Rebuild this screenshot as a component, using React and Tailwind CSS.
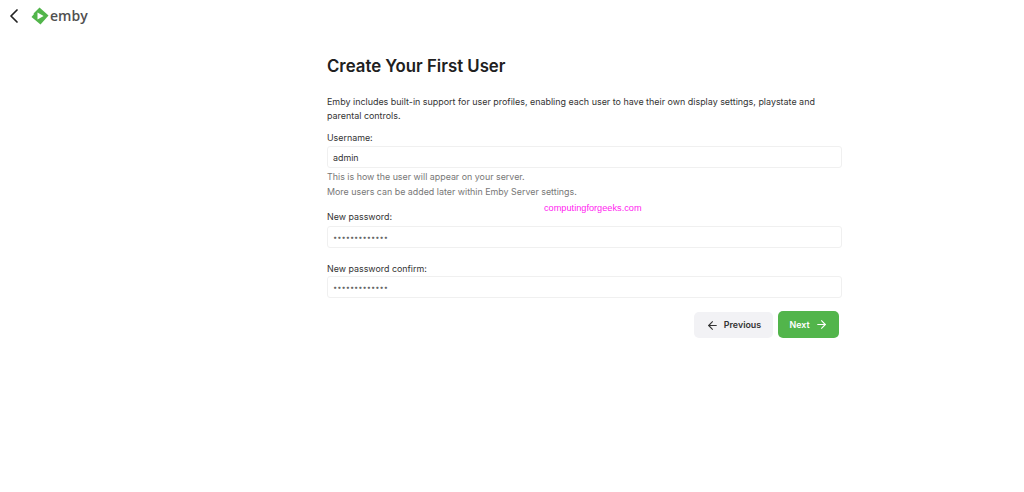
import { ArrowLeft, ArrowRight, ChevronLeft } from "lucide-react";

const fieldClass =
  "block h-[22px] w-full rounded-[3px] border border-[#f0f0f0] bg-white px-[5px] leading-[20px] outline-none";

const App = () => {
  return (
    <div className="relative h-[492px] w-[1024px] overflow-hidden bg-white font-['Inter',sans-serif] text-[#202020]">
      {/* Header */}
      <header className="flex h-[32px] items-center pl-[2px]">
        <ChevronLeft size={24} strokeWidth={1.75} className="text-[#222222]" />
        <div className="ml-[5px] flex items-center">
          <svg width="18" height="18" viewBox="0 0 18 18">
            <path d="M8.5 0.5 L17.5 8.5 L9.5 17.5 L0.5 10 L3 7 L2.5 6.5 Z" fill="#52b54b" />
            <path d="M6.5 5.5 L12.6 9 L6.5 12.5 Z" fill="#ffffff" />
          </svg>
          <span className="ml-[1px] font-['Open_Sans',sans-serif] text-[14px] leading-none font-semibold text-[#505050]">emby</span>
        </div>
      </header>

      {/* Form */}
      <main className="mt-[21px] ml-[327px] w-[515px]">
        <h1 className="text-[16.8px] leading-[26px] font-semibold">Create Your First User</h1>
        <p className="mt-[16px] text-[8.93px] leading-[14px] text-[#333333]">
          Emby includes built-in support for user profiles, enabling each user to have their own display settings,
          playstate and parental controls.
        </p>

        <label className="mt-[8px] block text-[8.9px] leading-[14px] text-[#333333]">Username:</label>
        <input readOnly value="admin" className={`mt-[1px] text-[8.9px] text-[#333333] ${fieldClass}`} />
        <p className="mt-[2px] text-[8.9px] leading-[13px] text-[#777777]">This is how the user will appear on your server.</p>
        <p className="mt-[2px] text-[8.9px] leading-[13px] text-[#777777]">More users can be added later within Emby Server settings.</p>

        <label className="mt-[12px] block text-[8.9px] leading-[14px] text-[#333333]">New password:</label>
        <input readOnly type="password" value="aaaaaaaaaaaaa" className={`mt-[2px] text-[7.5px] text-[#666666] ${fieldClass}`} />

        <label className="mt-[14px] block text-[8.9px] leading-[14px] text-[#333333]">New password confirm:</label>
        <input readOnly type="password" value="aaaaaaaaaaaaa" className={`text-[7.5px] text-[#666666] ${fieldClass}`} />

        <div className="mt-[13px] flex items-end justify-end gap-[5px] pr-[3px]">
          <button className="flex h-[26px] w-[79px] items-center justify-center gap-[5px] rounded-[5px] bg-[#f2f2f5] text-[8.9px] font-semibold text-[#333333]">
            <ArrowLeft size={13} strokeWidth={2} />
            Previous
          </button>
          <button className="flex h-[27px] w-[61px] items-center justify-center gap-[5px] rounded-[5px] bg-[#52b54b] text-[8.9px] font-semibold text-white">
            Next
            <ArrowRight size={13} strokeWidth={2} />
          </button>
        </div>
      </main>

      {/* Watermark */}
      <span className="absolute top-[202px] left-[544px] font-['Liberation_Sans',sans-serif] text-[9.2px] leading-[13px] text-[#ff1df0]">
        computingforgeeks.com
      </span>
    </div>
  );
};

export default App;
